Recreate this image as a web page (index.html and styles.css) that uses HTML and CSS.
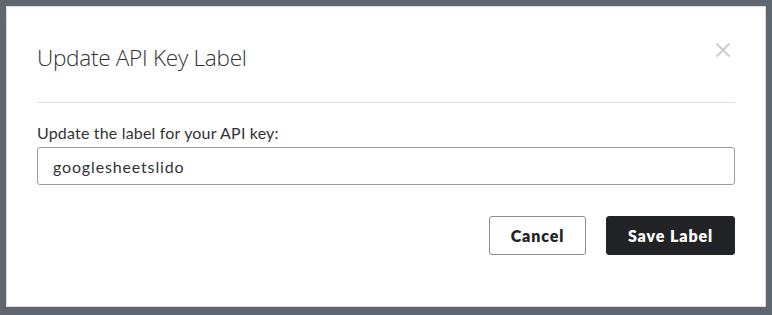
FILE: index.html
```html
<!DOCTYPE html>
<html>
<head>
<meta charset="utf-8">
<link rel="stylesheet" href="styles.css">
</head>
<body>
<div class="backdrop">
  <div class="modal">
    <div class="modal-header">
      <h2 class="modal-title">Update API Key Label</h2>
      <button class="close" aria-label="Close">
        <svg width="16" height="16" viewBox="0 0 16 16"><path d="M1.5 1.5L14.5 14.5M14.5 1.5L1.5 14.5" stroke="#cfcfcf" stroke-width="2.2" fill="none"/></svg>
      </button>
    </div>
    <div class="modal-body">
      <label class="field-label" for="lbl">Update the label for your API key:</label>
      <input id="lbl" class="field-input" type="text" value="googlesheetslido">
    </div>
    <div class="modal-footer">
      <button class="btn btn-secondary">Cancel</button>
      <button class="btn btn-primary">Save Label</button>
    </div>
  </div>
</div>
</body>
</html>
```
FILE: styles.css
```css
html, body {
  margin: 0;
  padding: 0;
}
body {
  background: #5e6670;
  width: 772px;
  height: 315px;
  overflow: hidden;
}
.backdrop {
  padding: 6px 6px 0 6px;
}
.modal {
  background: #ffffff;
  width: 760px;
  height: 301px;
  box-sizing: border-box;
  border: 1px solid #d8dadd;
  padding: 0 30px 0 30px;
}
.modal-header {
  display: flex;
  justify-content: space-between;
  align-items: flex-start;
  border-bottom: 1px solid #e2e2e2;
  height: 96px;
  box-sizing: border-box;
}
.modal-title {
  margin: 36px 0 0 0;
  font-family: "Open Sans", sans-serif;
  font-weight: 300;
  font-size: 22.6px;
  line-height: 30px;
  color: #333333;
  letter-spacing: -0.3px;
}
.close {
  background: none;
  border: none;
  padding: 0;
  margin: 35px 4px 0 0;
  width: 16px;
  height: 16px;
  cursor: pointer;
}
.close svg { display: block; }
.modal-body {
  display: flex;
  flex-direction: column;
  padding-top: 20px;
}
.field-label {
  font-family: "Lato", sans-serif;
  font-size: 16px;
  line-height: 20px;
  color: #333333;
  letter-spacing: 0.18px;
  margin-bottom: 4px;
}
.field-input {
  height: 38px;
  box-sizing: border-box;
  border: 1px solid #9b9b9b;
  border-radius: 3px;
  padding: 0 15px;
  font-family: "Lato", sans-serif;
  font-size: 16px;
  letter-spacing: 0.85px;
  color: #333333;
  outline: none;
}
.modal-footer {
  display: flex;
  justify-content: flex-end;
  gap: 20px;
  margin-top: 31px;
}
.btn {
  height: 39px;
  box-sizing: border-box;
  border-radius: 3px;
  font-family: "Lato", sans-serif;
  font-weight: 800;
  font-size: 16px;
  letter-spacing: 0.9px;
  cursor: pointer;
}
.btn-secondary {
  width: 97px;
  background: #ffffff;
  border: 1px solid #8d8d8d;
  color: #222222;
}
.btn-primary {
  width: 129px;
  background: #222326;
  border: 1px solid #222326;
  color: #ffffff;
}
```
